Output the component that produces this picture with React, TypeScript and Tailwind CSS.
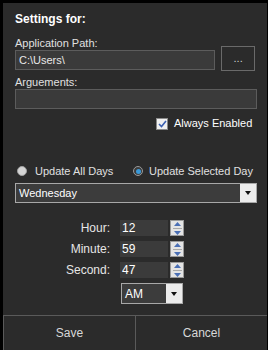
import React from "react";

function Spinner() {
  return (
    <div className="flex h-[16px] w-[14px] flex-col items-center justify-center gap-[2px] border border-[#9a9a9a] bg-[#e4e4e4]">
      <svg width="7" height="4" viewBox="0 0 7 4">
        <path d="M0 4 L3.5 0 L7 4 Z" fill="#4a6fb5" />
      </svg>
      <div className="h-px w-[9px] bg-[#a8a8a8]" />
      <svg width="7" height="4" viewBox="0 0 7 4">
        <path d="M0 0 L3.5 4 L7 0 Z" fill="#4a6fb5" />
      </svg>
    </div>
  );
}

function DropArrow() {
  return (
    <div className="flex h-full w-[16px] items-center justify-center bg-[#ececec]">
      <svg width="6" height="4" viewBox="0 0 6 4">
        <path d="M0 0 L3 4 L6 0 Z" fill="#111" />
      </svg>
    </div>
  );
}

function TimeRow({ label, value }: { label: string; value: string }) {
  return (
    <div className="flex h-[16px] items-center">
      <span className="w-[107px] text-right text-[12px] leading-[16px] text-[#e6e6e6]">{label}</span>
      <div className="ml-[10px] flex h-[16px] w-[48px] items-center bg-[#3b3b3b] pl-[2px] text-[12px] text-white">
        {value}
      </div>
      <div className="ml-[2px]">
        <Spinner />
      </div>
    </div>
  );
}

export default function App() {
  return (
    <div className="h-[350px] w-[268px] whitespace-nowrap bg-black pl-[3px] pr-[1px] pt-[3px] font-['Liberation_Sans',Arial,sans-serif]">
      <div className="flex h-[347px] flex-col bg-[#2b2b2b]">
        <div className="flex flex-col px-[12px]">
          <div className="mt-[9px] h-[14px] text-[12px] font-bold leading-[14px] text-white">Settings for:</div>
          <div className="mt-[11px] h-[12px] text-[11px] leading-[12px] text-[#e0e0e0]">Application Path:</div>
          <div className="mt-[1px] flex items-start gap-[6px]">
            <div className="flex h-[20px] w-[202px] items-center border border-[#5c5c5c] bg-[#3a3a3a] pl-[3px] text-[11px] text-[#e8e8e8]">
              C:\Users\
            </div>
            <div className="mt-[-4px] flex h-[25px] w-[34px] items-center justify-center border border-[#6a6a6a] text-[11px] text-[#d0d0d0]">
              ...
            </div>
          </div>
          <div className="mt-[5px] h-[12px] text-[11px] leading-[12px] text-[#e0e0e0]">Arguements:</div>
          <div className="mt-[1px] h-[20px] w-[242px] border border-[#5c5c5c] bg-[#3a3a3a]" />
          <div className="ml-[141px] mt-[8px] flex h-[13px] items-center">
            <div className="flex h-[12px] w-[12px] items-center justify-center border border-[#8a8a8a] bg-[#f0f0f0]">
              <svg width="9" height="8" viewBox="0 0 9 8">
                <path d="M1 4 L3.5 6.5 L8 1" stroke="#3b5fb0" strokeWidth="1.6" fill="none" />
              </svg>
            </div>
            <span className="ml-[6px] text-[11px] leading-[13px] text-white">Always Enabled</span>
          </div>
          <div className="mt-[35px] flex h-[12px] items-center text-[11px] leading-[12px] text-[#e0e0e0]">
            <div className="ml-[2px] h-[10px] w-[10px] rounded-full border border-[#a0a0a0] bg-[#d4d4d4]" />
            <span className="ml-[8px] w-[98px]">Update All Days</span>
            <div className="flex h-[10px] w-[10px] items-center justify-center rounded-full border border-[#9a9a9a] bg-[#3c3c3c]">
              <div className="h-[5px] w-[5px] rounded-full bg-[#3a9ad9]" />
            </div>
            <span className="ml-[6px]">Update Selected Day</span>
          </div>
          <div className="mt-[6px] flex h-[20px] w-[242px] items-stretch border border-[#a8a8a8] bg-[#3c3c3c]">
            <span className="flex flex-1 items-center pl-[3px] text-[11px] text-white">Wednesday</span>
            <DropArrow />
          </div>
        </div>
        <div className="mt-[17px] flex flex-col gap-[5px]">
          <TimeRow label="Hour:" value="12" />
          <TimeRow label="Minute:" value="59" />
          <TimeRow label="Second:" value="47" />
          <div className="ml-[118px] flex h-[21px] w-[62px] items-stretch border border-[#a8a8a8] bg-[#3c3c3c]">
            <span className="flex flex-1 items-center pl-[3px] text-[12px] text-white">AM</span>
            <DropArrow />
          </div>
        </div>
        <div className="mt-auto flex h-[35px] border-t border-[#5a5a5a]">
          <div className="flex flex-1 items-center justify-center border-l border-r border-[#5a5a5a] text-[12px] text-[#d8d8d8]">
            Save
          </div>
          <div className="flex flex-1 items-center justify-center text-[12px] text-[#d8d8d8]">Cancel</div>
        </div>
      </div>
    </div>
  );
}
